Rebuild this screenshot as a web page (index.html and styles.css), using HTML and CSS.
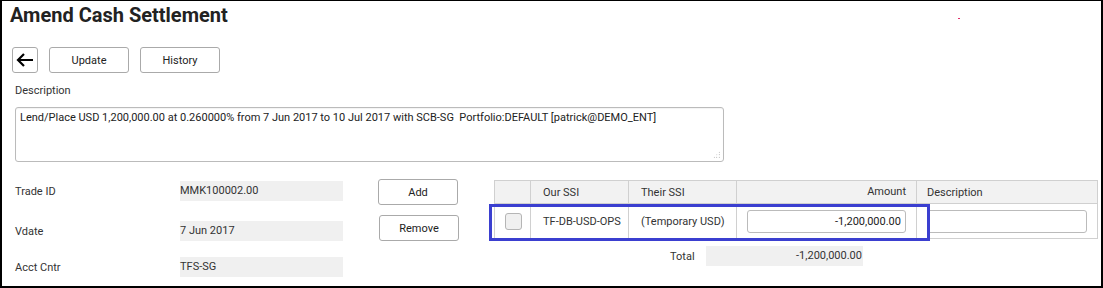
FILE: index.html
```html
<!DOCTYPE html>
<html lang="en">
<head>
    <meta charset="UTF-8">
    <title>Amend Cash Settlement</title>
    <link rel="stylesheet" href="styles.css">
</head>
<body>
    <div class="page">
        <h1 class="title">Amend Cash Settlement</h1>
        <span class="stray-dot"></span>

        <div class="toolbar">
            <button class="btn back" title="Back">
                <svg width="18" height="14" viewBox="0 0 18 14">
                    <path d="M17 7H2M8 1L2 7l6 6" fill="none" stroke="#000" stroke-width="2.2"/>
                </svg>
            </button>
            <button class="btn">Update</button>
            <button class="btn">History</button>
        </div>

        <div class="desc-label">Description</div>
        <div class="desc-box">Lend/Place USD 1,200,000.00 at 0.260000% from 7 Jun 2017 to 10 Jul 2017 with SCB-SG&nbsp; Portfolio:DEFAULT [patrick@DEMO_ENT]<span class="grip"></span></div>

        <div class="lower">
            <div class="fields">
                <div class="field first">
                    <span class="label">Trade ID</span>
                    <span class="value">MMK100002.00</span>
                </div>
                <div class="field second">
                    <span class="label">Vdate</span>
                    <span class="value">7 Jun 2017</span>
                </div>
                <div class="field third">
                    <span class="label">Acct Cntr</span>
                    <span class="value">TFS-SG</span>
                </div>
            </div>

            <div class="side-buttons">
                <button class="btn">Add</button>
                <button class="btn remove">Remove</button>
            </div>

            <div class="ssi">
                <table class="ssi-table">
                    <colgroup>
                        <col style="width: 36px">
                        <col style="width: 98px">
                        <col style="width: 108px">
                        <col style="width: 180px">
                        <col style="width: 181px">
                    </colgroup>
                    <thead>
                        <tr>
                            <th class="c-check"></th>
                            <th class="c-our">Our SSI</th>
                            <th class="c-their">Their SSI</th>
                            <th class="c-amount">Amount</th>
                            <th class="c-desc">Description</th>
                        </tr>
                    </thead>
                    <tbody>
                        <tr>
                            <td class="c-check"><span class="checkbox"></span></td>
                            <td class="c-our">TF-DB-USD-OPS</td>
                            <td class="c-their">(Temporary USD)</td>
                            <td class="c-amount"><span class="input num">-1,200,000.00</span></td>
                            <td class="c-desc"><span class="input"></span></td>
                        </tr>
                    </tbody>
                </table>
                <div class="total">
                    <span class="total-label">Total</span>
                    <span class="total-value">-1,200,000.00</span>
                </div>
                <div class="highlight"></div>
            </div>
        </div>
    </div>
</body>
</html>
```

FILE: styles.css
```css
* {
    box-sizing: border-box;
}
body {
    margin: 0;
    font-family: "Roboto", "Liberation Sans", sans-serif;
    font-size: 11px;
    color: #333;
    background: #fff;
}
.page {
    position: relative;
    width: 1103px;
    height: 288px;
    border: 2px solid #000;
    border-top-width: 1px;
    padding: 0 0 0 8px;
}
.title {
    margin: 2px 0 0 0;
    font-size: 20px;
    font-weight: 700;
    line-height: 24px;
    color: #222;
}
.stray-dot {
    position: absolute;
    left: 956px;
    top: 17px;
    width: 2px;
    height: 1px;
    background: #e0306a;
}
.toolbar {
    display: flex;
    gap: 11px;
    margin: 20px 0 0 2px;
}
.btn {
    height: 26px;
    width: 80px;
    padding: 0;
    background: #fff;
    border: 1px solid #aaa;
    border-radius: 3px;
    font-family: inherit;
    font-size: 11px;
    color: #222;
}
.btn.back {
    width: 26px;
    display: flex;
    align-items: center;
    justify-content: center;
}
.desc-label {
    margin: 11px 0 0 5px;
    line-height: 14px;
}
.desc-box {
    position: relative;
    margin: 9px 0 0 5px;
    width: 709px;
    height: 55px;
    border: 1px solid #bbb;
    border-radius: 3px;
    padding: 3px 4px;
    line-height: 14px;
    color: #222;
    box-shadow: inset 0 1px 1px rgba(0, 0, 0, 0.05);
}
.grip {
    position: absolute;
    right: 3px;
    bottom: 3px;
    width: 7px;
    height: 7px;
    background: radial-gradient(circle, #999 0.6px, transparent 0.8px) 0 0 / 2.5px 2.5px;
    clip-path: polygon(100% 0, 100% 100%, 0 100%);
}
.lower {
    display: flex;
    margin-top: 17px;
}
.fields {
    width: 333px;
    padding-left: 5px;
}
.field {
    display: flex;
    align-items: center;
    height: 20px;
}
.field.first {
    margin-top: 2px;
}
.field.second {
    margin-top: 20px;
}
.field.third {
    margin-top: 16px;
}
.label {
    width: 165px;
    color: #333;
}
.value {
    width: 163px;
    height: 20px;
    line-height: 20px;
    background: #f0f0f0;
    color: #333;
}
.side-buttons {
    display: flex;
    flex-direction: column;
    gap: 10px;
    margin-left: 35px;
}
.side-buttons .remove {
    margin-left: 1px;
}
.ssi {
    position: relative;
    margin-left: 35px;
    margin-top: 1px;
}
.ssi-table {
    border-collapse: collapse;
    table-layout: fixed;
    width: 603px;
}
.ssi-table th,
.ssi-table td {
    border: 1px solid #d0d0d0;
    padding: 0 10px;
    font-weight: 400;
    text-align: left;
    color: #333;
    white-space: nowrap;
}
.ssi-table th {
    height: 23px;
    background: #f2f2f2;
}
.ssi-table td {
    height: 35px;
}
.ssi-table .c-check {
    padding: 0 8px 0 10px;
}
.ssi-table .c-our,
.ssi-table .c-their {
    padding-left: 12px;
}
.ssi-table th.c-amount {
    text-align: right;
    vertical-align: top;
    padding-top: 4px;
}
.checkbox {
    display: block;
    width: 17px;
    height: 17px;
    background: #f0f0f0;
    border: 1px solid #b5b5b5;
    border-radius: 3px;
}
.input {
    display: block;
    height: 23px;
    line-height: 21px;
    border: 1px solid #bbb;
    border-radius: 3px;
    padding: 0 4px;
    color: #222;
    background: #fff;
}
.input.num {
    text-align: right;
}
.total {
    display: flex;
    align-items: center;
    margin-top: 7px;
    margin-left: 176px;
}
.total-label {
    width: 36px;
}
.total-value {
    width: 157px;
    height: 20px;
    line-height: 20px;
    text-align: right;
    padding-right: 1px;
    background: #f0f0f0;
}
.highlight {
    position: absolute;
    left: -5px;
    top: 24px;
    width: 441px;
    height: 37px;
    border: 3px solid #3b3fd0;
    pointer-events: none;
}
```
